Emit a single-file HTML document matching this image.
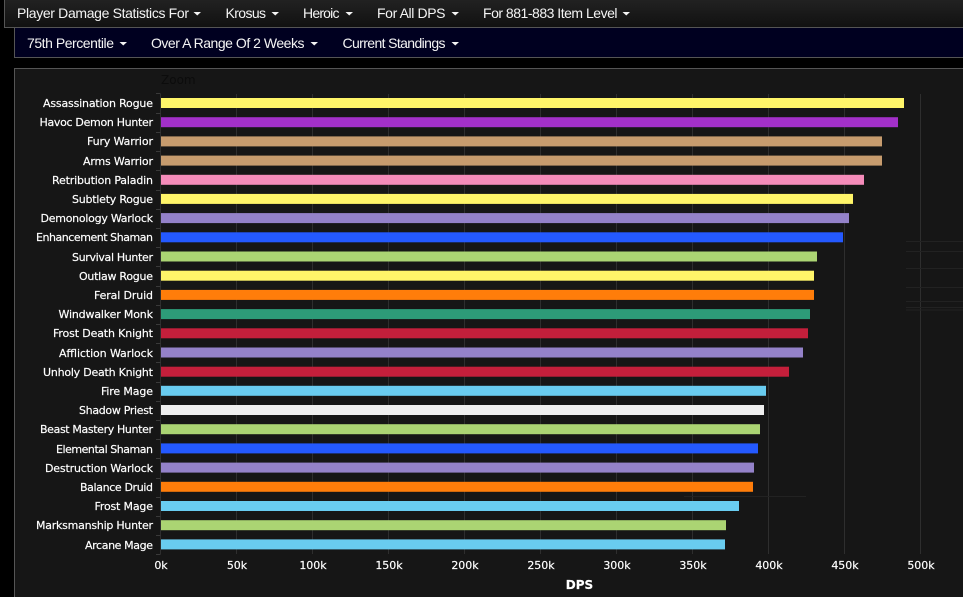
<!DOCTYPE html>
<html><head><meta charset="utf-8">
<style>
html,body{margin:0;padding:0;background:#000;width:963px;height:597px;overflow:hidden}
body{position:relative;font-family:"Liberation Sans",Arial,sans-serif}
.bar1{position:absolute;left:4px;top:-1px;width:959px;height:28px;background:linear-gradient(#222,#111);border-left:1px solid #555;border-bottom:1px solid #555;box-sizing:content-box}
.bar2{position:absolute;left:14px;top:28px;width:949px;height:29px;background:#000020;border-left:1px solid #555;border-bottom:1px solid #555}
.panel{position:absolute;left:14px;top:68px;width:949px;height:529px;background:#161616;border-left:1px solid #555;border-top:1px solid #555}
svg{position:absolute;left:0;top:0}
svg text{font-family:"DejaVu Sans",sans-serif;font-size:11px;fill:#fff;stroke:#fff;stroke-width:.18px}
svg text.n{font-family:"Liberation Sans",sans-serif;font-size:14px;fill:#f4f4f4;stroke:none}
</style></head><body>
<div class="bar1"></div>
<div class="bar2"></div>
<div class="panel"></div>
<svg width="963" height="597" viewBox="0 0 963 597">
<text class="n" x="17" y="18" textLength="172">Player Damage Statistics For</text>
<text class="n" x="225.5" y="18" textLength="40.5">Krosus</text>
<text class="n" x="303" y="18" textLength="36.5">Heroic</text>
<text class="n" x="377" y="18" textLength="68.5">For All DPS</text>
<text class="n" x="483" y="18" textLength="134.5">For 881-883 Item Level</text>
<text class="n" x="27" y="48" textLength="87">75th Percentile</text>
<text class="n" x="151" y="48" textLength="153.5">Over A Range Of 2 Weeks</text>
<text class="n" x="342.5" y="48" textLength="103">Current Standings</text>
<g fill="#f4f4f4">
<path d="M193.5 12H201L197.25 15.5Z"/>
<path d="M271.5 12H279L275.25 15.5Z"/>
<path d="M345.5 12H353L349.25 15.5Z"/>
<path d="M451.5 12H459L455.25 15.5Z"/>
<path d="M622.5 12H630L626.25 15.5Z"/>
<path d="M119.5 42H127L123.25 45.5Z"/>
<path d="M310.5 42H318L314.25 45.5Z"/>
<path d="M451.5 42H459L455.25 45.5Z"/>
</g>
<text x="161" y="84" style="font-size:12px;fill:#0c0c0c;stroke:none">Zoom</text>
<g stroke="#2e2e2e" stroke-width="1">
<path d="M160.5 94V554M236.5 94V554M312.5 94V554M388.5 94V554M464.5 94V554M540.5 94V554M616.5 94V554M692.5 94V554M768.5 94V554M844.5 94V554M920.5 94V554"/>
</g>
<g stroke="#3a3a3a" stroke-width="1">
<path d="M156 93.5H160.5M156 113.5H160.5M156 132.5H160.5M156 151.5H160.5M156 170.5H160.5M156 190.5H160.5M156 209.5H160.5M156 228.5H160.5M156 247.5H160.5M156 266.5H160.5M156 286.5H160.5M156 305.5H160.5M156 324.5H160.5M156 343.5H160.5M156 362.5H160.5M156 382.5H160.5M156 401.5H160.5M156 420.5H160.5M156 439.5H160.5M156 458.5H160.5M156 478.5H160.5M156 497.5H160.5M156 516.5H160.5M156 535.5H160.5M156 554.5H160.5"/>
</g>
<g stroke="#222" stroke-width="1">
<path d="M906 241.5H963M906 251.5H963M906 268.5H963M906 287.5H963M906 301.5H963M906 307.5H963M906 310H963M684 496.5H806"/>
</g>
<g>
<rect x="161" y="98" width="743" height="10" fill="#fff569"/>
<rect x="161" y="117.2" width="737" height="10" fill="#a330c9"/>
<rect x="161" y="136.4" width="721" height="10" fill="#c79c6e"/>
<rect x="161" y="155.6" width="721" height="10" fill="#c79c6e"/>
<rect x="161" y="174.8" width="703" height="10" fill="#f58cba"/>
<rect x="161" y="193.9" width="692" height="10" fill="#fff569"/>
<rect x="161" y="213.1" width="688" height="10" fill="#9482c9"/>
<rect x="161" y="232.3" width="682" height="10" fill="#2459ff"/>
<rect x="161" y="251.5" width="656" height="10" fill="#abd473"/>
<rect x="161" y="270.7" width="653" height="10" fill="#fff569"/>
<rect x="161" y="289.9" width="653" height="10" fill="#ff7d0a"/>
<rect x="161" y="309.1" width="649" height="10" fill="#2d9b78"/>
<rect x="161" y="328.3" width="647" height="10" fill="#c41f3b"/>
<rect x="161" y="347.5" width="642" height="10" fill="#9482c9"/>
<rect x="161" y="366.7" width="628" height="10" fill="#c41f3b"/>
<rect x="161" y="385.8" width="605" height="10" fill="#69ccf0"/>
<rect x="161" y="405" width="603" height="10" fill="#f0f0f0"/>
<rect x="161" y="424.2" width="599" height="10" fill="#abd473"/>
<rect x="161" y="443.4" width="597" height="10" fill="#2459ff"/>
<rect x="161" y="462.6" width="593" height="10" fill="#9482c9"/>
<rect x="161" y="481.8" width="592" height="10" fill="#ff7d0a"/>
<rect x="161" y="501" width="578" height="10" fill="#69ccf0"/>
<rect x="161" y="520.2" width="565" height="10" fill="#abd473"/>
<rect x="161" y="539.4" width="564" height="10" fill="#69ccf0"/>
</g>
<g>
<text x="43" y="107" textLength="110">Assassination Rogue</text>
<text x="39.5" y="126" textLength="113.5">Havoc Demon Hunter</text>
<text x="87" y="145" textLength="66">Fury Warrior</text>
<text x="83" y="165" textLength="70">Arms Warrior</text>
<text x="52" y="184" textLength="101">Retribution Paladin</text>
<text x="72" y="203" textLength="81">Subtlety Rogue</text>
<text x="40.5" y="222" textLength="112.5">Demonology Warlock</text>
<text x="36" y="241" textLength="117">Enhancement Shaman</text>
<text x="72" y="261" textLength="81">Survival Hunter</text>
<text x="79" y="280" textLength="74">Outlaw Rogue</text>
<text x="94" y="299" textLength="59">Feral Druid</text>
<text x="58.5" y="318" textLength="94.5">Windwalker Monk</text>
<text x="53" y="337" textLength="100">Frost Death Knight</text>
<text x="59" y="357" textLength="94">Affliction Warlock</text>
<text x="43" y="376" textLength="110">Unholy Death Knight</text>
<text x="101" y="395" textLength="52">Fire Mage</text>
<text x="79" y="414" textLength="74">Shadow Priest</text>
<text x="40" y="433" textLength="113">Beast Mastery Hunter</text>
<text x="56" y="453" textLength="97">Elemental Shaman</text>
<text x="45" y="472" textLength="108">Destruction Warlock</text>
<text x="80" y="491" textLength="73">Balance Druid</text>
<text x="94.5" y="510" textLength="58.5">Frost Mage</text>
<text x="36" y="529" textLength="117">Marksmanship Hunter</text>
<text x="85" y="549" textLength="68">Arcane Mage</text>
</g>
<g text-anchor="middle">
<text x="161" y="569">0k</text>
<text x="237" y="569">50k</text>
<text x="313" y="569">100k</text>
<text x="389" y="569">150k</text>
<text x="465" y="569">200k</text>
<text x="541" y="569">250k</text>
<text x="617" y="569">300k</text>
<text x="693" y="569">350k</text>
<text x="769" y="569">400k</text>
<text x="845" y="569">450k</text>
<text x="921" y="569">500k</text>
<text x="579.5" y="589" style="font-weight:bold;font-size:12px">DPS</text>
</g>
</svg>
</body></html>
